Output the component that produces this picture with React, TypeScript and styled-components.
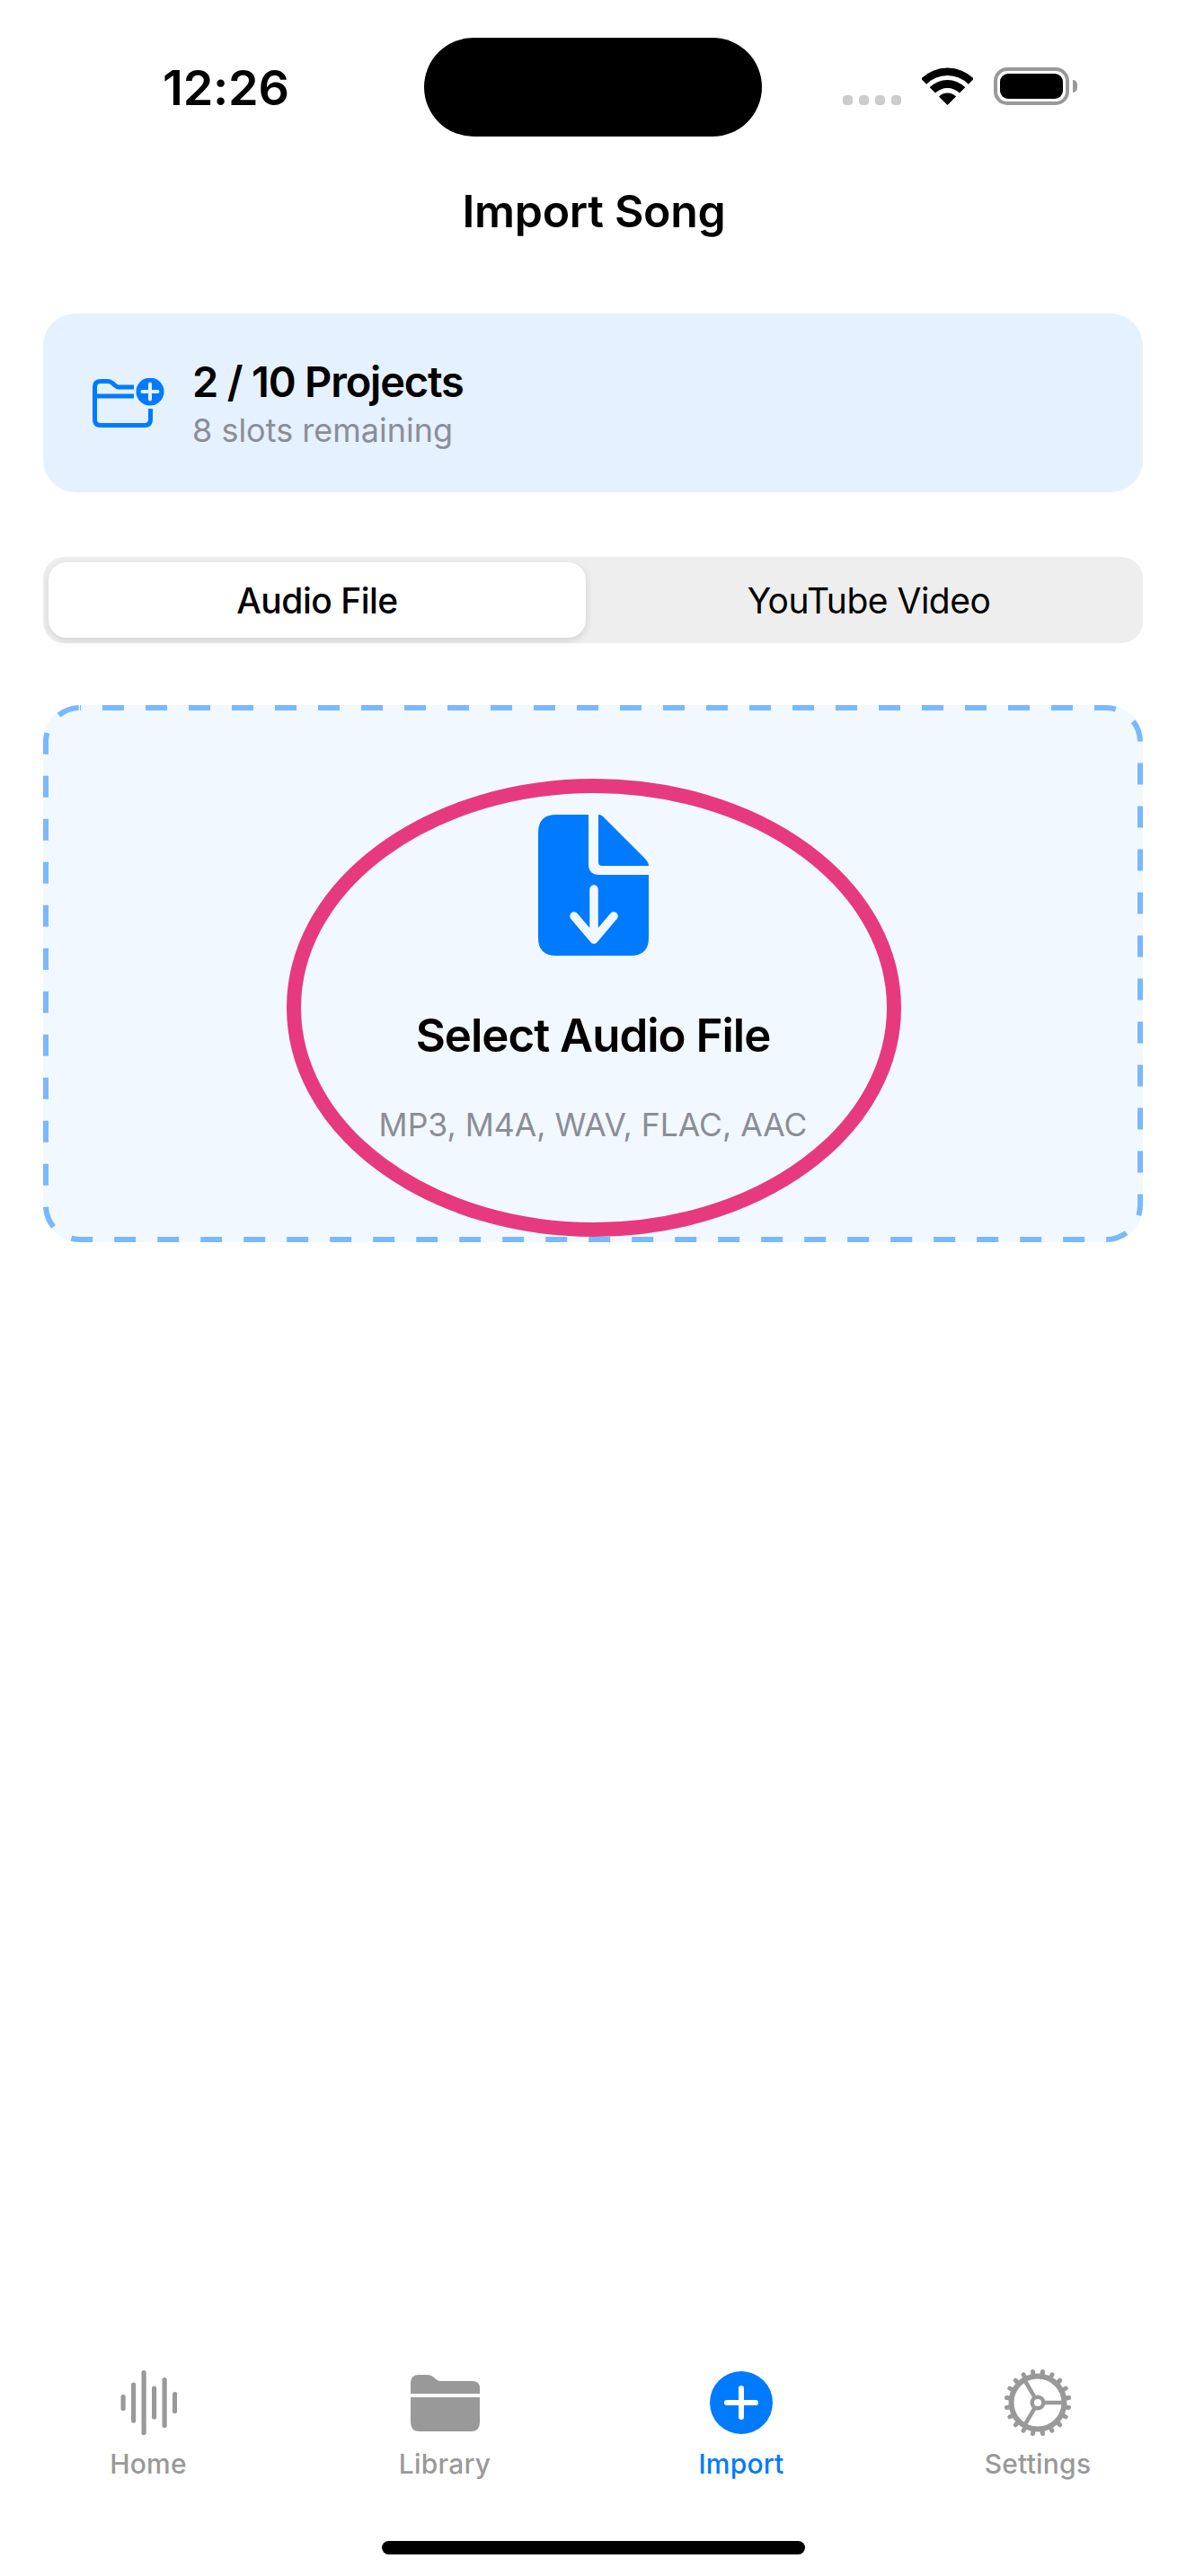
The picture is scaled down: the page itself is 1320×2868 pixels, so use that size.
import React from "react";
import styled, { createGlobalStyle } from "styled-components";

const BLUE = "#007aff";
const TAB_GRAY = "#999999";

const GlobalStyle = createGlobalStyle`
  html, body {
    margin: 0;
    padding: 0;
    background: #ffffff;
  }
  * {
    box-sizing: border-box;
  }
`;

// annular sector pointing up from the apex of the wifi glyph
function wifiBand(inner: number, outer: number) {
  const cx = 28.5;
  const cy = 42;
  const s = Math.SQRT1_2;
  const p = (r: number, dir: number) => `${cx + dir * r * s} ${cy - r * s}`;
  if (inner === 0) {
    return `M${cx} ${cy} L${p(outer, -1)} A${outer} ${outer} 0 0 1 ${p(outer, 1)} Z`;
  }
  return `M${p(inner, -1)} L${p(outer, -1)} A${outer} ${outer} 0 0 1 ${p(outer, 1)} L${p(inner, 1)} A${inner} ${inner} 0 0 0 ${p(inner, -1)} Z`;
}

function WifiIcon() {
  return (
    <svg width="57" height="42" viewBox="0 0 57 42" fill="#000">
      <path d={wifiBand(33, 41.5)} />
      <path d={wifiBand(19, 28)} />
      <path d={wifiBand(0, 13.5)} />
    </svg>
  );
}

function FolderPlusIcon() {
  return (
    <svg width="80" height="56" viewBox="0 0 80 56" fill="none">
      <path
        d="M46 10H29Q27 10 25 8L22 5.5Q20 3.5 17 3.5H9Q2.5 3.5 2.5 10V46Q2.5 52.5 9 52.5H58Q64.5 52.5 64.5 46V34M2.5 20H46"
        stroke={BLUE}
        strokeWidth="5"
      />
      <circle cx="64" cy="15" r="15.5" fill={BLUE} />
      <path d="M64 6.5V23.5M55.5 15H72.5" stroke="#e5f1fe" strokeWidth="4" strokeLinecap="round" />
    </svg>
  );
}

function FileDownIcon() {
  return (
    <svg width="123" height="157" viewBox="0 0 123 157" fill="none">
      <path
        d="M20 0H56V55Q56 67 68 67H123V137Q123 157 103 157H20Q0 157 0 137V20Q0 0 20 0Z"
        fill={BLUE}
      />
      <path d="M67 0Q71 0 74 4L117 47Q123 53 123 57H71Q67 57 67 53Z" fill={BLUE} />
      <path
        d="M62 83V137M40 113L62 139L84 113"
        stroke="#f2f8ff"
        strokeWidth="9.5"
        strokeLinecap="round"
        strokeLinejoin="round"
      />
    </svg>
  );
}

const WAVE_BARS = [18, 45, 72, 37, 56, 24];

function WaveIcon() {
  return (
    <svg width="64" height="72" viewBox="0 0 64 72" fill={TAB_GRAY}>
      {WAVE_BARS.map((h, i) => (
        <rect key={i} x={1.5 + i * 11.5} y={36 - h / 2} width="5.2" height={h} rx="2.6" />
      ))}
    </svg>
  );
}

function LibraryIcon() {
  return (
    <svg width="77" height="63" viewBox="0 0 77 63" fill={TAB_GRAY}>
      <path d="M0 21V9Q0 0 9 0H19Q23 0 26 3L29 5.5Q31 7 34 7H69Q77 7 77 15V21Z" />
      <path d="M0 25H77V53Q77 63 67 63H10Q0 63 0 53Z" />
    </svg>
  );
}

function ImportIcon() {
  return (
    <svg width="70" height="70" viewBox="0 0 70 70">
      <circle cx="35" cy="35" r="35" fill={BLUE} />
      <path d="M35 19V51M19 35H51" stroke="#fff" strokeWidth="6" strokeLinecap="round" />
    </svg>
  );
}

function GearIcon() {
  const teeth = Array.from({ length: 20 }, (_, i) => ((i + 0.5) * 360) / 20);
  return (
    <svg width="76" height="76" viewBox="-38 -38 76 76" fill="none" stroke={TAB_GRAY}>
      <circle r="29.5" strokeWidth="6" />
      {teeth.map((deg) => (
        <path key={deg} d="M32 0H35" strokeWidth="5" strokeLinecap="round" transform={`rotate(${deg})`} />
      ))}
      {[0, 120, 240].map((deg) => (
        <path key={deg} d="M7 0H28" strokeWidth="4.5" transform={`rotate(${deg})`} />
      ))}
      <circle r="6.3" strokeWidth="4.5" />
    </svg>
  );
}

const TABS = [
  { label: "Home", icon: <WaveIcon /> },
  { label: "Library", icon: <LibraryIcon /> },
  { label: "Import", icon: <ImportIcon />, active: true },
  { label: "Settings", icon: <GearIcon /> },
];

export default function App() {
  return (
    <>
      <GlobalStyle />
      <Page>
        <StatusBar>
          <Clock>12:26</Clock>
          <Island />
          <StatusIcons>
            <Dots>
              {[0, 1, 2, 3].map((i) => (
                <Dot key={i} />
              ))}
            </Dots>
            <WifiIcon />
            <Battery>
              <BatteryFill />
              <BatteryCap />
            </Battery>
          </StatusIcons>
        </StatusBar>

        <NavTitle>Import Song</NavTitle>

        <Main>
          <QuotaCard>
            <FolderPlusIcon />
            <QuotaText>
              <QuotaTitle>2 / 10 Projects</QuotaTitle>
              <QuotaSub>8 slots remaining</QuotaSub>
            </QuotaText>
          </QuotaCard>

          <Segmented>
            <Segment $active>Audio File</Segment>
            <Segment>YouTube Video</Segment>
          </Segmented>

          <DropZone>
            <DashedEdge width="1224" height="598" viewBox="0 0 1224 598" fill="none">
              <rect
                x="3"
                y="3"
                width="1218"
                height="592"
                rx="38"
                stroke="#7ab8ff"
                strokeWidth="6"
                strokeDasharray="24 24"
                strokeDashoffset="23"
              />
            </DashedEdge>
            <FileDownIcon />
            <DropTitle>Select Audio File</DropTitle>
            <DropFormats>MP3, M4A, WAV, FLAC, AAC</DropFormats>
            <Annotation width="684" height="510" viewBox="0 0 684 510" fill="none">
              <ellipse cx="342" cy="255" rx="334" ry="247" stroke="#e63a7c" strokeWidth="16" />
            </Annotation>
          </DropZone>
        </Main>

        <TabBar>
          {TABS.map((tab) => (
            <TabItem key={tab.label}>
              <TabIcon>{tab.icon}</TabIcon>
              <TabLabel $active={tab.active}>{tab.label}</TabLabel>
            </TabItem>
          ))}
        </TabBar>

        <HomeBar>
          <HomeIndicator />
        </HomeBar>
      </Page>
    </>
  );
}

const Page = styled.div`
  width: 1320px;
  height: 2868px;
  display: flex;
  flex-direction: column;
  background: #ffffff;
  color: #000000;
  font-family: Inter, "Liberation Sans", sans-serif;
`;

const StatusBar = styled.div`
  display: grid;
  grid-template-columns: 472px 376px 1fr;
  height: 152px;
  padding-top: 42px;
`;

const Clock = styled.div`
  padding-left: 181px;
  padding-top: 24px;
  font-size: 54px;
  line-height: 64px;
  font-weight: 600;
  letter-spacing: -0.2px;
`;

const Island = styled.div`
  height: 110px;
  border-radius: 55px;
  background: #000000;
`;

const StatusIcons = styled.div`
  display: flex;
  align-items: flex-end;
  height: 75px;
  padding-left: 90px;
`;

const Dots = styled.div`
  display: flex;
  gap: 7px;
  margin-right: 23px;
`;

const Dot = styled.div`
  width: 11px;
  height: 11px;
  border-radius: 4px;
  background: #cccccc;
`;

const Battery = styled.div`
  position: relative;
  width: 84px;
  height: 42px;
  margin-left: 23px;
  padding: 3px;
  border: 4px solid #999999;
  border-radius: 15px;
`;

const BatteryFill = styled.div`
  width: 100%;
  height: 100%;
  border-radius: 9px;
  background: #000000;
`;

const BatteryCap = styled.div`
  position: absolute;
  top: 10px;
  right: -13px;
  width: 5px;
  height: 14px;
  border-radius: 0 5px 5px 0;
  background: #999999;
`;

const NavTitle = styled.div`
  height: 197px;
  padding-top: 52px;
  padding-left: 2px;
  text-align: center;
  font-size: 50px;
  line-height: 62px;
  font-weight: 600;
  letter-spacing: -0.3px;
`;

const Main = styled.main`
  flex: 1;
  display: flex;
  flex-direction: column;
  padding: 0 48px;
`;

const QuotaCard = styled.section`
  display: flex;
  align-items: center;
  gap: 32px;
  height: 199px;
  padding-left: 55px;
  border-radius: 36px;
  background: #e5f1fe;
`;

const QuotaText = styled.div`
  display: flex;
  flex-direction: column;
  gap: 2px;
  margin-left: -1px;
`;

const QuotaTitle = styled.div`
  font-size: 47px;
  line-height: 58px;
  font-weight: 600;
  letter-spacing: -1.2px;
`;

const QuotaSub = styled.div`
  font-size: 36px;
  line-height: 46px;
  color: #8a8e96;
`;

const Segmented = styled.div`
  display: grid;
  grid-template-columns: 1fr 1fr;
  gap: 16px;
  height: 96px;
  margin-top: 72px;
  padding: 6px;
  border-radius: 24px;
  background: #eeeeee;
`;

const Segment = styled.div<{ $active?: boolean }>`
  display: flex;
  align-items: center;
  justify-content: center;
  border-radius: 20px;
  font-size: 39px;
  letter-spacing: -0.5px;
  font-weight: ${(p) => (p.$active ? 500 : 400)};
  background: ${(p) => (p.$active ? "#ffffff" : "transparent")};
  box-shadow: ${(p) => (p.$active ? "0 3px 10px rgba(0, 0, 0, 0.12)" : "none")};
`;

const DropZone = styled.section`
  position: relative;
  display: flex;
  flex-direction: column;
  align-items: center;
  height: 598px;
  margin-top: 69px;
  padding-top: 122px;
  border-radius: 40px;
  background: #f2f8ff;
`;

const DashedEdge = styled.svg`
  position: absolute;
  top: 0;
  left: 0;
`;

const Annotation = styled.svg`
  position: absolute;
  top: 82px;
  left: 271px;
`;

const DropTitle = styled.div`
  margin-top: 57px;
  font-size: 51px;
  line-height: 64px;
  font-weight: 600;
  letter-spacing: -1px;
`;

const DropFormats = styled.div`
  margin-top: 46px;
  font-size: 35.5px;
  line-height: 44px;
  color: #8a8e96;
`;

const TabBar = styled.nav`
  display: grid;
  grid-template-columns: repeat(4, 1fr);
  height: 155px;
`;

const TabItem = styled.div`
  display: flex;
  flex-direction: column;
  align-items: center;
`;

const TabIcon = styled.div`
  display: flex;
  align-items: center;
  justify-content: center;
  height: 76px;
`;

const TabLabel = styled.div<{ $active?: boolean }>`
  margin-top: 12px;
  font-size: 30px;
  line-height: 36px;
  font-weight: 500;
  letter-spacing: 0.2px;
  color: ${(p) => (p.$active ? BLUE : TAB_GRAY)};
`;

const HomeBar = styled.div`
  display: flex;
  justify-content: center;
  height: 76px;
  padding-top: 37px;
`;

const HomeIndicator = styled.div`
  width: 471px;
  height: 15px;
  border-radius: 8px;
  background: #000000;
`;
